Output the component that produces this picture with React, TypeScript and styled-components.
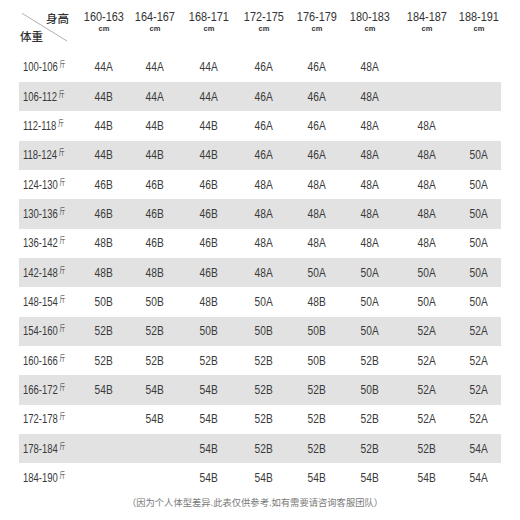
import React from "react";
import styled, { createGlobalStyle } from "styled-components";

const Global = createGlobalStyle`
  html, body { margin: 0; padding: 0; background: #ffffff; }
  body { font-family: "Liberation Sans", Arial, sans-serif; color: #3a3a3a; }
`;

const COLS = "60px 50px 52px 56px 54px 52px 54px 60px 44px";

const Page = styled.div`
  width: 482px;
  padding-left: 19px;
  display: flex;
  flex-direction: column;
`;

const HeaderRow = styled.div`
  display: grid;
  grid-template-columns: ${COLS};
  height: 52.67px;
`;

const Corner = styled.div`
  position: relative;
  display: flex;
  flex-direction: column;
  font-family: "Noto Sans CJK SC", sans-serif;
  font-size: 11.5px;
  font-weight: 500;
  color: #333;
`;

const CornerTop = styled.span`
  align-self: flex-end;
  padding-right: 10px;
  line-height: 14px;
  margin-top: 11px;
`;

const CornerBottom = styled.span`
  align-self: flex-start;
  padding-left: 1px;
  line-height: 14px;
  margin-top: 4px;
`;

const Diagonal = styled.svg`
  position: absolute;
  left: 0;
  top: 0;
  width: 60px;
  height: 52px;
  pointer-events: none;
`;

const HeadCell = styled.div`
  display: flex;
  flex-direction: column;
  align-items: center;
  padding-top: 9px;
`;

const Narrow = styled.span<{ $scale: number; $origin?: string }>`
  display: inline-block;
  white-space: nowrap;
  transform: scaleX(${(p) => p.$scale});
  transform-origin: ${(p) => p.$origin ?? "center"};
`;

const HeadNum = styled.span`
  font-size: 13px;
  line-height: 15px;
  color: #333;
  white-space: nowrap;
`;

const Unit = styled.span`
  font-size: 7.5px;
  font-weight: bold;
  line-height: 9px;
  margin-top: 0px;
  color: #333;
`;

const Row = styled.div<{ $shade: boolean }>`
  display: grid;
  grid-template-columns: ${COLS};
  height: 29.33px;
  background: ${(p) => (p.$shade ? "#e2e2e2" : "#ffffff")};
`;

const Label = styled.div`
  display: flex;
  align-items: center;
  padding-left: 4px;
  font-size: 12px;
  white-space: nowrap;
`;

const Jin = styled.sup`
  font-family: "Noto Sans CJK SC", sans-serif;
  font-size: 7.5px;
  line-height: 7px;
  margin-left: 2px;
  position: relative;
  top: -4px;
  vertical-align: baseline;
`;

const Cell = styled.div`
  display: flex;
  align-items: center;
  justify-content: center;
  font-size: 12px;
`;

const Note = styled.div`
  font-family: "Noto Sans CJK SC", sans-serif;
  font-size: 9.3px;
  line-height: 18px;
  color: #7a7a7a;
  text-align: center;
  padding-right: 10px;
`;

const heights = ["160-163", "164-167", "168-171", "172-175", "176-179", "180-183", "184-187", "188-191"];

const rows: [string, string[]][] = [
  ["100-106", ["44A", "44A", "44A", "46A", "46A", "48A", "", ""]],
  ["106-112", ["44B", "44A", "44A", "46A", "46A", "48A", "", ""]],
  ["112-118", ["44B", "44B", "44B", "46A", "46A", "48A", "48A", ""]],
  ["118-124", ["44B", "44B", "44B", "46A", "46A", "48A", "48A", "50A"]],
  ["124-130", ["46B", "46B", "46B", "48A", "48A", "48A", "48A", "50A"]],
  ["130-136", ["46B", "46B", "46B", "48A", "48A", "48A", "48A", "50A"]],
  ["136-142", ["48B", "46B", "46B", "48A", "48A", "48A", "48A", "50A"]],
  ["142-148", ["48B", "48B", "46B", "48A", "50A", "50A", "50A", "50A"]],
  ["148-154", ["50B", "50B", "48B", "50A", "48B", "50A", "50A", "50A"]],
  ["154-160", ["52B", "52B", "50B", "50B", "50B", "50A", "52A", "52A"]],
  ["160-166", ["52B", "52B", "52B", "52B", "50B", "52B", "52A", "52A"]],
  ["166-172", ["54B", "54B", "54B", "52B", "52B", "50B", "52A", "52A"]],
  ["172-178", ["", "54B", "54B", "52B", "52B", "52B", "52A", "52A"]],
  ["178-184", ["", "", "54B", "52B", "52B", "52B", "52B", "54A"]],
  ["184-190", ["", "", "54B", "54B", "54B", "54B", "54B", "54A"]],
];

export default function App() {
  return (
    <>
      <Global />
      <Page>
        <HeaderRow>
          <Corner>
            <Diagonal viewBox="0 0 60 52">
              <line x1="3" y1="13.3" x2="48" y2="41" stroke="#9a9a9a" strokeWidth="0.8" />
            </Diagonal>
            <CornerTop>身高</CornerTop>
            <CornerBottom>体重</CornerBottom>
          </Corner>
          {heights.map((h) => (
            <HeadCell key={h}>
              <HeadNum>
                <Narrow $scale={0.84}>{h}</Narrow>
              </HeadNum>
              <Unit>cm</Unit>
            </HeadCell>
          ))}
        </HeaderRow>
        {rows.map(([w, vals], i) => (
          <Row key={w} $shade={i % 2 === 1}>
            <Label>
              <Narrow $scale={0.79} $origin="left center">
                {w}
                <Jin>斤</Jin>
              </Narrow>
            </Label>
            {vals.map((v, j) => (
              <Cell key={j}>
                <Narrow $scale={0.85}>{v}</Narrow>
              </Cell>
            ))}
          </Row>
        ))}
        <Note>（因为个人体型差异.此表仅供参考.如有需要请咨询客服团队）</Note>
      </Page>
    </>
  );
}
